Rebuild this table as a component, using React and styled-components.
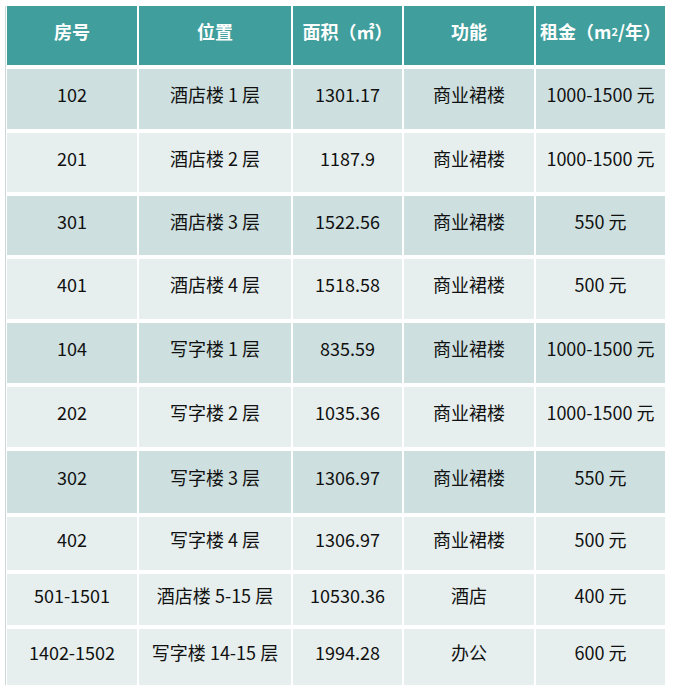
import React from 'react'
import styled, { createGlobalStyle } from 'styled-components'

const GlobalStyle = createGlobalStyle`
    body {
        margin : 0;
        background : #ffffff;
        font-family : "Noto Sans CJK SC", "Noto Sans", sans-serif;
    }
`;

const PageWrapper = styled.div`
    padding-top : 6px;
    padding-left : 5px;
`;

const Table = styled.div`
    width : 660px;
    display : flex;
    flex-direction : column;
    gap : 4px;
    border-left : 1px solid #cfd8d8;
    padding-left : 1px;
`;

const Row = styled.div`
    display : grid;
    grid-template-columns : 130px 152px 109px 130px 129px;
    column-gap : 2px;
    height : ${props => props.$h}px;
`;

const HeadCell = styled.div`
    background-color : #409e9c;
    color : #ffffff;
    font-size : 18px;
    font-weight : 700;
    display : flex;
    align-items : center;
    justify-content : center;
    padding-bottom : 9px;
    box-sizing : border-box;
    white-space : nowrap;
`;

const Cell = styled.div`
    background-color : ${props => props.$dark ? '#cddfdf' : '#e6efee'};
    color : #111111;
    font-size : 18px;
    display : flex;
    align-items : center;
    justify-content : center;
    padding-bottom : 10px;
    box-sizing : border-box;
    white-space : nowrap;
`;

const Sup = styled.sup`
    font-size : 11px;
    line-height : 0;
`;

const rows = [
    { id : '102', place : '酒店楼 1 层', area : '1301.17', use : '商业裙楼', rent : '1000-1500 元', h : 60, dark : true },
    { id : '201', place : '酒店楼 2 层', area : '1187.9', use : '商业裙楼', rent : '1000-1500 元', h : 59 },
    { id : '301', place : '酒店楼 3 层', area : '1522.56', use : '商业裙楼', rent : '550 元', h : 59, dark : true },
    { id : '401', place : '酒店楼 4 层', area : '1518.58', use : '商业裙楼', rent : '500 元', h : 60 },
    { id : '104', place : '写字楼 1 层', area : '835.59', use : '商业裙楼', rent : '1000-1500 元', h : 60, dark : true },
    { id : '202', place : '写字楼 2 层', area : '1035.36', use : '商业裙楼', rent : '1000-1500 元', h : 60 },
    { id : '302', place : '写字楼 3 层', area : '1306.97', use : '商业裙楼', rent : '550 元', h : 62, dark : true },
    { id : '402', place : '写字楼 4 层', area : '1306.97', use : '商业裙楼', rent : '500 元', h : 53 },
    { id : '501-1501', place : '酒店楼 5-15 层', area : '10530.36', use : '酒店', rent : '400 元', h : 51 },
    { id : '1402-1502', place : '写字楼 14-15 层', area : '1994.28', use : '办公', rent : '600 元', h : 56 },
];

const App = () => {
    return (
        <>
        <GlobalStyle/>
        <PageWrapper>
            <Table>
                <Row $h={59}>
                    <HeadCell>房号</HeadCell>
                    <HeadCell>位置</HeadCell>
                    <HeadCell>面积（㎡）</HeadCell>
                    <HeadCell>功能</HeadCell>
                    <HeadCell>租金（m<Sup>2</Sup>/年）</HeadCell>
                </Row>
                {rows.map(r => (
                    <Row key={r.id} $h={r.h}>
                        <Cell $dark={r.dark}>{r.id}</Cell>
                        <Cell $dark={r.dark}>{r.place}</Cell>
                        <Cell $dark={r.dark}>{r.area}</Cell>
                        <Cell $dark={r.dark}>{r.use}</Cell>
                        <Cell $dark={r.dark}>{r.rent}</Cell>
                    </Row>
                ))}
            </Table>
        </PageWrapper>
        </>
    )
};

export default App;
